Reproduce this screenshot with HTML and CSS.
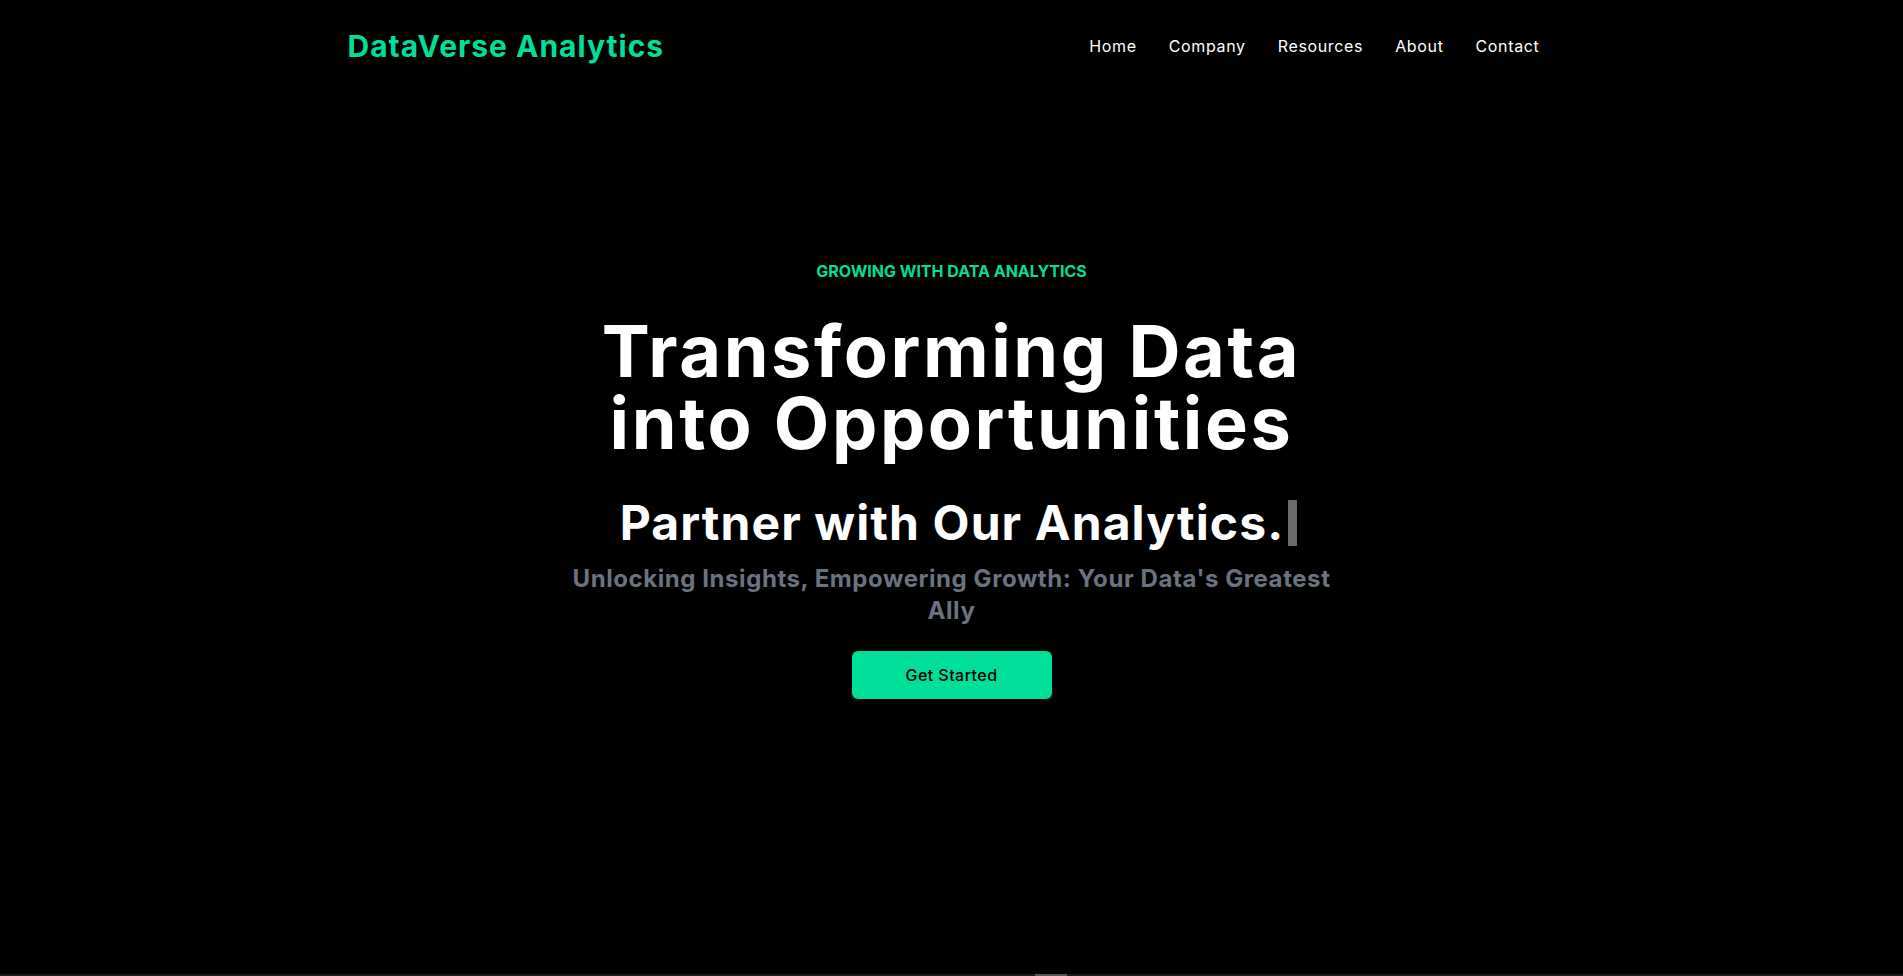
FILE: index.html
```html
<!DOCTYPE html>
<html lang="en">
<head>
<meta charset="utf-8">
<title>DataVerse Analytics</title>
<link rel="stylesheet" href="styles.css">
</head>
<body>
<header class="navbar">
  <h1 class="logo">DataVerse Analytics</h1>
  <ul class="menu">
    <li>Home</li>
    <li>Company</li>
    <li>Resources</li>
    <li>About</li>
    <li>Contact</li>
  </ul>
</header>
<main class="hero">
  <div class="hero-inner">
    <p class="eyebrow">GROWING WITH DATA ANALYTICS</p>
    <h1 class="title">Transforming Data into Opportunities</h1>
    <div class="typed-row">
      <p class="typed-text">Partner with Our Analytics.</p>
      <span class="typed-cursor"></span>
    </div>
    <p class="subtitle">Unlocking Insights, Empowering Growth: Your Data's Greatest Ally</p>
    <button class="cta">Get Started</button>
  </div>
</main>
<div class="bottom-strip"><span class="strip-thumb"></span></div>
</body>
</html>
```
FILE: styles.css
```css
* { box-sizing: border-box; }
html, body { margin: 0; padding: 0; }
body {
  background: #000;
  color: #fff;
  font-family: "Inter", "Noto Sans", sans-serif;
  overflow: hidden;
  height: 976px;
}
.navbar {
  display: flex;
  justify-content: space-between;
  align-items: center;
  height: 96px;
  max-width: 1240px;
  margin: 0 auto;
  padding: 0 16px 4px;
  position: relative;
  z-index: 2;
}
.logo {
  width: 100%;
  margin: 0;
  font-size: 30px;
  line-height: 36px;
  font-weight: 700;
  letter-spacing: 1px;
  color: #00df9a;
}
.menu {
  display: flex;
  list-style: none;
  margin: 0;
  padding: 0;
}
.menu li {
  padding: 16px;
  font-size: 16px;
  line-height: 24px;
  letter-spacing: 0.65px;
  white-space: nowrap;
}
.hero-inner {
  max-width: 800px;
  width: 100%;
  height: 974px;
  margin: -96px auto 0;
  text-align: center;
  display: flex;
  flex-direction: column;
  justify-content: center;
}
.eyebrow {
  margin: 0;
  padding: 8px;
  color: #00df9a;
  font-weight: 700;
  font-size: 16px;
  line-height: 24px;
}
.title {
  margin: 0;
  padding: 24px 0;
  font-size: 72px;
  line-height: 72px;
  font-weight: 700;
  letter-spacing: 2.6px;
}
.typed-row {
  display: flex;
  justify-content: center;
  align-items: center;
  padding-left: 14px;
}
.typed-text {
  margin: 0;
  padding: 16px 0;
  font-size: 48px;
  line-height: 48px;
  font-weight: 700;
  letter-spacing: 1.1px;
}
.typed-cursor {
  display: inline-block;
  width: 9px;
  height: 46px;
  margin-left: 4px;
  background: #6b6b6b;
}
.subtitle {
  margin: 0;
  font-size: 24px;
  line-height: 32px;
  font-weight: 700;
  letter-spacing: 0.57px;
  color: #6b7280;
}
.cta {
  display: block;
  width: 200px;
  margin: 24px auto;
  padding: 12px 0;
  border: none;
  border-radius: 6px;
  background: #00df9a;
  color: #000;
  font-family: inherit;
  font-size: 16px;
  line-height: 24px;
  font-weight: 500;
  letter-spacing: 0.45px;
}
.bottom-strip {
  height: 2px;
  background: #1a1a1a;
  display: flex;
}
.strip-thumb {
  width: 32px;
  height: 2px;
  margin-left: 1035px;
  background: #555;
}
```
